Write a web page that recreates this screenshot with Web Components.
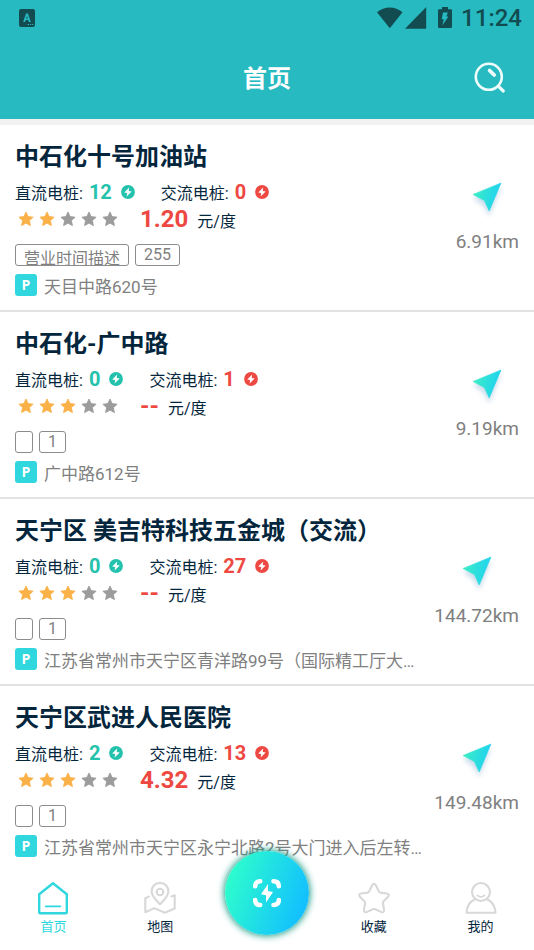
<!DOCTYPE html>
<html lang="zh-CN">
<head>
<meta charset="utf-8">
<meta name="viewport" content="width=device-width, initial-scale=1">
<title>首页</title>
<style>
html, body { margin: 0; height: 100%; }
body { font-family: Roboto, "Noto Sans CJK SC", sans-serif; color: #04263d; background: #fff; overflow: hidden; }
</style>
</head>
<body>
<charge-app>
  <app-header slot="header">首页</app-header>
  <station-card name="中石化十号加油站" dc="12" ac="0" stars="2" price="1.20" tags="营业时间描述|255" address="天目中路620号" distance="6.91km"></station-card>
  <station-card name="中石化-广中路" dc="0" ac="1" stars="3" price="--" tags="|1" address="广中路612号" distance="9.19km"></station-card>
  <station-card name="天宁区 美吉特科技五金城（交流）" dc="0" ac="27" stars="3" price="--" tags="|1" address="江苏省常州市天宁区青洋路99号（国际精工厅大…" distance="144.72km"></station-card>
  <station-card name="天宁区武进人民医院" dc="2" ac="13" stars="3" price="4.32" tags="|1" address="江苏省常州市天宁区永宁北路2号大门进入后左转…" distance="149.48km"></station-card>
  <tab-bar slot="footer"></tab-bar>
</charge-app>
<script>
const define = (name, html) => customElements.define(name, class extends HTMLElement {
  constructor() { super(); this.attachShadow({ mode: 'open' }); }
  connectedCallback() {
    this.shadowRoot.innerHTML = typeof html === 'function' ? html(this) : html;
  }
});

define('charge-app', `
<style>
:host { display: flex; flex-direction: column; height: 100vh; }
main { flex: 1; min-height: 0; overflow: hidden; border-top: 6px solid #f2f2f2; }
</style>
<slot name="header"></slot>
<main><slot></slot></main>
<slot name="footer"></slot>`);

define('status-bar', `
<style>
:host { display: flex; align-items: center; height: 36px; padding: 0 12px 0 19px; color: #124c51; }
.left { flex: 1; }
svg { display: block; }
.net { margin-right: 11px; }
.bat { margin-right: 9px; }
time { font-size: 24px; line-height: 36px; font-weight: 500; }
</style>
<div class="left"><svg width="16" height="18" viewBox="0 0 16 18"><rect width="16" height="18" rx="2" fill="#124c51"/><path d="M4.2 13 7 4.4h2L11.8 13H9.9l-.6-1.9H6.7L6.1 13zM7.2 9.5h1.6L8 6.7z" fill="#27bac2" fill-rule="evenodd"/><path d="M8.500 15.500h1.400M11 15.500h1.200M13.200 15.500h1.200" stroke="#27bac2"/></svg></div>
<svg class="net" width="50" height="22" viewBox="0 0 50 22" fill="currentColor"><path d="M0 5.2C7.5-1.2 18-1.2 25.5 5.2L12.8 21.2z"/><path d="M49.2 0v21.800H28z"/></svg>
<svg class="bat" width="14" height="22" viewBox="0 0 14 22"><path d="M4 0h6v2.3h2.8Q14 2.3 14 3.5v16.3q0 1.2-1.2 1.2H1.2Q0 21 0 19.8V3.5q0-1.2 1.2-1.2H4z" fill="currentColor"/><path d="M5 5.5h4.8L8.4 9.6h2L4.3 18.5l1.5-6.2H3.7z" fill="#27bac2"/></svg>
<time>11:24</time>`);

define('app-header', `
<style>
:host { display: block; background: #27bac1; }
.bar { display: grid; grid-template-columns: 1fr auto 1fr; align-items: center; height: 83px; padding: 0 28px; }
h1 { grid-column: 2; margin: 0; padding-top: 2px; font-size: 24px; line-height: 32px; font-weight: 700; color: #fff; }
button { justify-self: end; border: 0; padding: 0; background: none; cursor: pointer; }
svg { display: block; }
</style>
<status-bar></status-bar>
<div class="bar"><h1><slot></slot></h1>
<button aria-label="搜索"><svg width="32" height="32" viewBox="0 0 32 32" fill="none" stroke="#effcfc" stroke-linecap="round"><circle cx="14.800" cy="14.800" r="13" stroke-width="2.600"/><path d="m15.600 8.500 4.600 4.500" stroke-width="3.800"/><path d="m24.700 24.700 4.600 4.300" stroke-width="3.200"/></svg></button></div>`);

define('charge-count', el => `
<style>
:host { display: flex; align-items: baseline; height: 28px; font-size: 16px; line-height: 28px; }
b { margin: 0 9px 0 6px; font-size: 20px; font-weight: 700; color: var(--tone); }
svg { align-self: center; fill: var(--tone); }
</style>
<span><slot></slot></span><b>${el.getAttribute('value')}</b>
<svg width="14" height="14" viewBox="0 0 14 14"><circle cx="7" cy="7" r="6.900"/><path d="M8.200 2.600 3.200 7.600l3 .5-.6 3.400 5.100-5-3-.6z" fill="#fff"/></svg>`);

define('star-rating', el => `
<style>
:host { display: flex; gap: 5px; padding-left: 3px; }
svg { width: 16px; height: 16px; fill: #9c9c9c; }
.on { fill: #fab148; }
</style>
${[1, 2, 3, 4, 5].map(i => `<svg class="${i <= +el.getAttribute('value') ? 'on' : ''}" viewBox="0 0 16 16"><path d="M8 1 10.1 5.6 15.1 6.2 11.4 9.6 12.4 14.6 8 12.1 3.6 14.6 4.6 9.6.9 6.2 5.9 5.6z" stroke-linejoin="round" stroke="${i <= +el.getAttribute('value') ? '#fab148' : '#9c9c9c'}" stroke-width=".9"/></svg>`).join('')}`);

define('info-tag', `
<style>
:host { display: block; box-sizing: border-box; height: 22px; padding: 0 8px; border: 1px solid #8c8c8c; border-radius: 3px; overflow: hidden; font-size: 16px; line-height: normal; color: #808080; }
</style><slot></slot>`);

define('station-card', el => {
  const a = n => el.getAttribute(n);
  return `
<style>
:host { display: block; padding: 16px 15px 10px; border-bottom: 2px solid #e2e2e2; }
.top { display: flex; justify-content: space-between; }
h2 { margin: 0 0 5px; font-size: 24px; line-height: 32px; font-weight: 700; color: #04263d; }
.counts { display: flex; gap: 26px; }
.green { --tone: #24c2ad; }
.red { --tone: #ee4842; }
.price { display: flex; align-items: baseline; height: 26px; line-height: 26px; font-size: 16px; }
.price star-rating { align-self: center; }
.price b { margin: 0 9px 0 22px; font-size: 24px; font-weight: 700; color: #ee4842; }
.tags { display: flex; gap: 6px; margin: 12px 0 8px; }
.go { display: flex; flex-direction: column; align-items: center; align-self: flex-start; padding-top: 37px; font-size: 19px; line-height: 24px; color: #808080; text-decoration: none; }
.go svg { display: block; margin-bottom: 12px; }
.place { display: flex; align-items: flex-start; gap: 7px; font-size: 17px; line-height: 26px; color: #808080; white-space: nowrap; }
.p { flex: none; width: 22px; height: 22px; border-radius: 3px; background: #31d7de; color: #fff; font: 700 14px/22px "Open Sans", sans-serif; text-align: center; }
</style>
<div class="top">
  <div>
    <h2>${a('name')}</h2>
    <div class="counts"><charge-count class="green" value="${a('dc')}">直流电桩:</charge-count><charge-count class="red" value="${a('ac')}">交流电桩:</charge-count></div>
    <div class="price"><star-rating value="${a('stars')}"></star-rating><b>${a('price')}</b><span>元/度</span></div>
    <div class="tags">${a('tags').split('|').map(t => `<info-tag>${t}</info-tag>`).join('')}</div>
  </div>
  <a class="go" href="#navigate"><svg width="42" height="40" viewBox="0 0 42 40"><defs><linearGradient id="g" x1="0" x2="1" y1=".3" y2=".5"><stop stop-color="#3deec4"/><stop offset="1" stop-color="#1dd0f2"/></linearGradient><filter id="b" x="-50%" y="-50%" width="200%" height="200%"><feGaussianBlur stdDeviation="2.5"/></filter></defs><path d="M7 20 35 9 23 38 18 28z" fill="#b0cce2" opacity=".7" filter="url(#b)"/><path d="M7 16.500 35 5 23.200 33 18.400 22.600z" fill="url(#g)" stroke="url(#g)" stroke-width=".6" stroke-linejoin="round"/></svg><span>${a('distance')}</span></a>
</div>
<div class="place"><span class="p">P</span><span>${a('address')}</span></div>`;
});

define('tab-item', el => `
<style>
:host { display: block; }
a { display: flex; flex-direction: column; align-items: center; padding-top: 16px; color: var(--label, #04263d); font-size: 13px; line-height: 20px; text-decoration: none; }
::slotted(svg) { display: block; margin-bottom: 2px; }
</style>
<a href="#${el.getAttribute('to')}"><slot name="icon"></slot><span><slot></slot></span></a>`);

define('tab-bar', `
<style>
:host { position: relative; display: grid; grid-template-columns: repeat(5, 1fr); height: 85px; background: #fff; }
.active { --label: #31d7de; }
.scan { justify-self: center; display: grid; place-items: center; width: 84px; height: 84px; margin-top: -14px; padding: 0; border: 0; border-radius: 50%; background: linear-gradient(110deg, #2effcb 8%, #12bfff 88%); box-shadow: 0 0 7px 1px #169d86; cursor: pointer; }
</style>
<tab-item class="active" to="home"><svg slot="icon" width="34" height="34" viewBox="0 0 34 34" fill="none" stroke="#31d7de" stroke-linecap="round" stroke-linejoin="round"><path d="M3.2 31.3V13.2L17 2.2l13.8 11v18.1q0 1-1 1H4.2q-1 0-1-1z" stroke-width="2.4"/><path d="M9.7 25.4h14.6" stroke-width="1.8"/></svg>首页</tab-item>
<tab-item to="map"><svg slot="icon" width="34" height="34" viewBox="0 0 34 34" fill="none" stroke="#d8d8d8" stroke-width="2.1" stroke-linecap="round" stroke-linejoin="round"><path d="M17 23.2C13 19.2 8.6 15.3 8.6 10.3a8.4 8.4 0 0 1 16.8 0c0 5-4.4 8.9-8.4 12.9z"/><circle cx="17" cy="11" r="3.3"/><path d="M5.8 15.6 2.3 17.2V31.2l9-4.1 10.5 4.6 9.9-4.2V14.3l-3.3 1.2"/></svg>地图</tab-item>
<button class="scan" aria-label="扫码充电"><svg width="32" height="32" viewBox="0 0 32 32" fill="none" stroke="#fff" stroke-width="4.6" stroke-linecap="round"><path d="M4.2 9.3Q4.2 4.3 9.2 4.3M22.500 4.3q5.3 0 5.3 5M27.800 23q0 5-5.3 5M9.2 28q-5 0-5-5"/><path d="M17 7 10 17.300l5 1V25.500l7-10.500-5-.9z" fill="#fff" stroke="none"/></svg></button>
<tab-item to="favorites"><svg slot="icon" width="34" height="34" viewBox="0 0 34 34" fill="none" stroke="#d8d8d8" stroke-width="2.1" stroke-linejoin="round"><path d="M15.2 4.2Q17 1.2 18.8 4.2L22 10.6Q22.4 11.4 23.3 11.6L29.8 12.5Q33.3 13.2 30.8 16L26.4 20.5Q25.8 21.1 25.9 22L27 28.7Q27.3 32.2 24 30.9L18.3 28.3Q17 27.8 15.7 28.3L10 30.9Q6.7 32.2 7 28.7L8.1 22Q8.2 21.1 7.6 20.5L3.2 16Q.7 13.2 4.2 12.5L10.7 11.6Q11.6 11.4 12 10.6Z"/></svg>收藏</tab-item>
<tab-item to="me"><svg slot="icon" width="34" height="34" viewBox="0 0 34 34" fill="none" stroke="#d8d8d8" stroke-width="2.1" stroke-linecap="round" stroke-linejoin="round"><circle cx="17" cy="11" r="9"/><path d="M13.4 14.3q3.6 3 7.2 0" stroke-width="1.7"/><path d="M11 18.3Q3.2 21.8 2.5 31.7H31.5Q30.8 21.8 23 18.3"/></svg>我的</tab-item>`);
</script>
</body>
</html>
